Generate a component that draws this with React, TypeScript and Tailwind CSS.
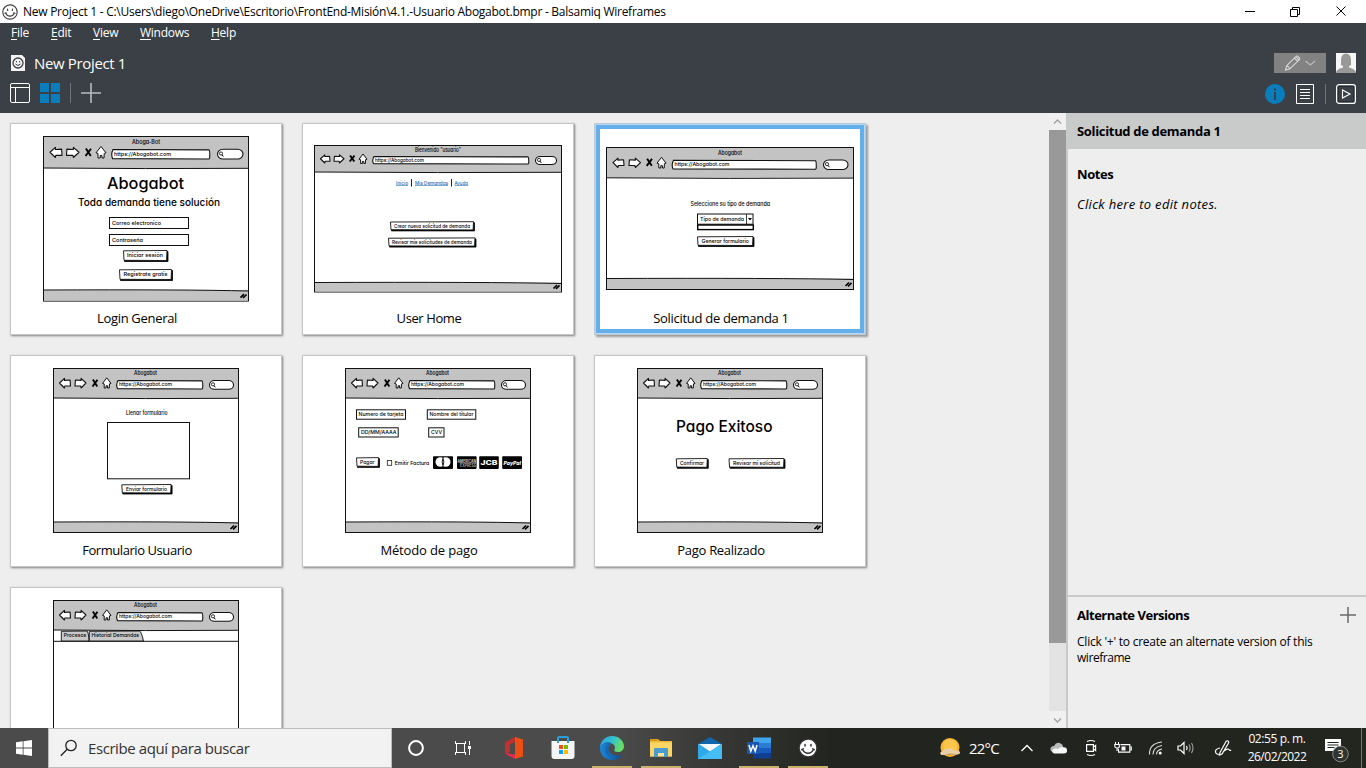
import type { ReactNode } from "react";

const INK = "#111";

type SketchTextProps = {
  x: number;
  y: number;
  w: number;
  size?: number;
  fill?: string;
  weight?: number;
  children: string;
};

function Label({ x, y, w, size = 5.6, fill = "#000", weight = 500, children }: SketchTextProps) {
  return (
    <text
      x={x}
      y={y}
      textLength={w}
      lengthAdjust="spacingAndGlyphs"
      fontSize={size}
      fontWeight={weight}
      fill={fill}
      className="font-['Inter','Open_Sans',sans-serif] [font-feature-settings:'cv11']"
    >
      {children}
    </text>
  );
}

function Button({ x, y, w, h, text, tx, tw }: { x: number; y: number; w: number; h: number; text: string; tx: number; tw: number }) {
  return (
    <g>
      <path d={`M${x + 1} ${y + 1}h${w}v${h}h${-w}z`} fill="#000" stroke="#000" strokeWidth="0.8" />
      <path d={`M${x} ${y + 0.3}L${x + w} ${y}L${x + w - 0.4} ${y + h}L${x + 0.5} ${y + h - 0.2}z`} fill="#fff" stroke={INK} strokeWidth="0.9" />
      <Label x={tx} y={y + h / 2 + 1.9} w={tw} size={5.4}>
        {text}
      </Label>
    </g>
  );
}

function Field({ x, y, w, h, text, tx, tw }: { x: number; y: number; w: number; h: number; text: string; tx: number; tw: number }) {
  return (
    <g>
      <rect x={x} y={y} width={w} height={h} fill="#fff" stroke={INK} strokeWidth="1" />
      <Label x={tx} y={y + h / 2 + 1.9} w={tw} size={5.4}>
        {text}
      </Label>
    </g>
  );
}

type Box = [number, number, number, number];

type FrameProps = {
  x: number;
  y: number;
  r: number;
  b: number;
  head: number;
  foot: number;
  title: string;
  titleX: number;
  titleY: number;
  titleW: number;
  back: Box;
  fwd: Box;
  close: Box;
  home: Box;
  url: Box;
  urlW: number;
  find: Box;
};

function ArrowShape({ box: [x, y, r, b], flip }: { box: Box; flip?: boolean }) {
  const w = r - x;
  const h = b - y;
  const d = `M0 ${h / 2}L${w * 0.45} 0.3V${h * 0.24}L${w - 0.4} ${h * 0.2}L${w} ${h * 0.8}L${w * 0.48} ${h * 0.8}L${w * 0.45} ${h}z`;
  return (
    <path
      d={d}
      transform={flip ? `translate(${r} ${y}) scale(-1 1)` : `translate(${x} ${y})`}
      fill="#fff"
      stroke={INK}
      strokeWidth="1.1"
      strokeLinejoin="round"
    />
  );
}

function Frame(p: FrameProps) {
  const [cx, cy, cr, cb] = p.close;
  const [hx, hy, hr, hb] = p.home;
  const hw = hr - hx;
  const hh = hb - hy;
  const [ux, uy, ur, ub] = p.url;
  const [sx, sy, sr, sb] = p.find;
  return (
    <g>
      <rect x={p.x + 0.5} y={p.y + 0.5} width={p.r - p.x} height={p.b - p.y} fill="#fff" stroke={INK} />
      <path d={`M${p.x + 1} ${p.y + 1}H${p.r}V${p.head}H${p.x + 1}z`} fill="#c3c3c3" />
      <path d={`M${p.x} ${p.head}Q${(p.x + p.r) / 2} ${p.head + 1} ${p.r} ${p.head + 0.3}`} fill="none" stroke={INK} />
      <path d={`M${p.x + 1} ${p.foot}H${p.r}V${p.b}H${p.x + 1}z`} fill="#c3c3c3" />
      <path d={`M${p.x} ${p.foot}Q${p.x + (p.r - p.x) * 0.7} ${p.foot - 0.6} ${p.r} ${p.foot + 1}`} fill="none" stroke={INK} />
      <path d={`M${p.r - 7.5} ${p.b - 3}l3.5 -3.5M${p.r - 5} ${p.b - 2.6}l3.5 -3.5`} stroke="#000" strokeWidth="1.6" />
      <Label x={p.titleX} y={p.titleY} w={p.titleW} size={5.6}>
        {p.title}
      </Label>
      <ArrowShape box={p.back} />
      <ArrowShape box={p.fwd} flip />
      <path d={`M${cx + 0.6} ${cy}L${cr - 0.2} ${cb}M${cr} ${cy + 0.2}L${cx + 0.2} ${cb}`} stroke="#000" strokeWidth="1.9" />
      <path
        d={`M${hx + hw / 2} ${hy}L${hr} ${hy + hh * 0.55}L${hx + hw * 0.82} ${hy + hh * 0.6}L${hx + hw * 0.8} ${hb}H${hx + hw * 0.6}V${hb - hh * 0.22}H${hx + hw * 0.42}V${hb}H${hx + hw * 0.2}V${hy + hh * 0.6}L${hx} ${hy + hh * 0.55}z`}
        fill="#fff"
        stroke={INK}
        strokeWidth="1"
        strokeLinejoin="round"
      />
      <path
        d={`M${ux + 1.5} ${uy}L${ur - 1} ${uy + 0.4}Q${ur} ${uy + 1} ${ur - 0.3} ${ub - 1}L${ur - 1} ${ub}L${ux + 1} ${ub - 0.4}Q${ux - 0.8} ${(uy + ub) / 2} ${ux + 1.5} ${uy}z`}
        fill="#fff"
        stroke={INK}
        strokeWidth="1.1"
      />
      <Label x={ux + 2.5} y={(uy + ub) / 2 + 1.6} w={p.urlW} size={5.4}>
        https://Abogabot.com
      </Label>
      <rect x={sx + 0.5} y={sy + 0.5} width={sr - sx - 1} height={sb - sy - 1} rx={(sb - sy) / 2} ry={(sb - sy) / 2} fill="#fff" stroke={INK} strokeWidth="1.1" />
      <circle cx={sx + 4} cy={(sy + sb) / 2 - 0.6} r="1.6" fill="none" stroke="#000" strokeWidth="0.8" />
      <path d={`M${sx + 5} ${(sy + sb) / 2 + 0.6}l1.3 1.8`} stroke="#000" strokeWidth="1" />
    </g>
  );
}

function SmallFrame({ dx, dy }: { dx: number; dy: number }) {
  const box = (x: number, y: number, r: number, b: number): Box => [x + dx, y + dy, r + dx, b + dy];
  return (
    <Frame
      x={53 + dx}
      y={368 + dy}
      r={238 + dx}
      b={532 + dy}
      head={398 + dy}
      foot={522 + dy}
      title="Abogabot"
      titleX={134 + dx}
      titleY={375.4 + dy}
      titleW={23}
      back={box(59.5, 378, 70.5, 388)}
      fwd={box(75, 378, 86, 388)}
      close={box(92.3, 379.5, 97.5, 386.5)}
      home={box(102.5, 377.8, 111, 388)}
      url={box(116.5, 380.5, 203, 389)}
      urlW={53}
      find={box(209, 380, 234, 389.8)}
    />
  );
}

function LoginSketch() {
  return (
    <>
      <Frame
        x={43} y={136} r={248} b={300.6} head={168} foot={290}
        title="Aboga-Bot" titleX={132} titleY={144} titleW={28}
        back={[50, 147, 62, 157.5]} fwd={[66.5, 147, 79, 157.5]} close={[85.3, 148.5, 91, 156]} home={[96, 146.5, 106, 158]}
        url={[111.5, 149.5, 210, 159]} urlW={57} find={[217, 148.7, 243.5, 159.5]}
      />
      <Label x={107} y={189} w={77} size={16}>Abogabot</Label>
      <Label x={78} y={206.3} w={142} size={10.5}>Toda demanda tiene solución</Label>
      <Field x={109.5} y={217.5} w={79} h={11} text="Correo electronico" tx={112} tw={49} />
      <Field x={109.5} y={234.5} w={79} h={11} text="Contraseña" tx={112} tw={31} />
      <Button x={123.5} y={250.5} w={43.5} h={10} text="Iniciar sesión" tx={127} tw={36} />
      <Button x={119.5} y={269.5} w={52} h={10} text="Registrate gratis" tx={123.5} tw={44} />
    </>
  );
}

function HomeSketch() {
  return (
    <>
      <Frame
        x={314} y={145} r={561} b={291.5} head={172} foot={282.5}
        title={'Bienvenido "usuario"'} titleX={415} titleY={152} titleW={46}
        back={[320.5, 154.5, 330, 163]} fwd={[334, 154.5, 344, 163]} close={[349.5, 155.5, 354.5, 161.5]} home={[359, 154, 367, 163.5]}
        url={[372.5, 156.5, 529, 164]} urlW={49} find={[535, 156, 557, 165]}
      />
      <Label x={396} y={184.6} w={12} size={5} fill="#1f6bb0">Inicio</Label>
      <Label x={415} y={184.6} w={33} size={5} fill="#1f6bb0">Mis Demandas</Label>
      <Label x={454.5} y={184.6} w={13.5} size={5} fill="#1f6bb0">Ayuda</Label>
      <path d="M396 185.5h12M415 185.5h33M454.5 185.5h13.5" stroke="#5b93c4" strokeWidth="0.8" />
      <path d="M411.5 179v7.5M451.5 179v7.5" stroke="#222" />
      <Button x={390.5} y={221.7} w={83} h={8.2} text="Crear nueva solicitud de demanda" tx={394} tw={76} />
      <Button x={388.5} y={237.9} w={86.5} h={8.2} text="Revisar mis solicitudes de demanda" tx={392} tw={80} />
    </>
  );
}

function RequestSketch() {
  return (
    <>
      <Frame
        x={606} y={147} r={853} b={289} head={177.8} foot={278.5}
        title="Abogabot" titleX={718} titleY={154.5} titleW={24}
        back={[613, 157.8, 624, 167.5]} fwd={[629, 157.8, 640.5, 167.5]} close={[646.5, 158.7, 652, 165.8]} home={[657, 157.3, 666, 168]}
        url={[672, 160.3, 816.5, 169.3]} urlW={55} find={[823, 159.5, 848.5, 170]}
      />
      <Label x={690.5} y={206.2} w={79.5} size={5.8}>Seleccione su tipo de demanda</Label>
      <Field x={697.5} y={214} w={55.5} h={10.2} text="Tipo de demanda" tx={700} tw={44} />
      <path d="M746.5 214v10" stroke="#111" strokeWidth="0.8" />
      <path d="M748 218h4l-2 2.4z" />
      <rect x="697.7" y="225" width="55.6" height="4.6" fill="#fff" stroke="#000" strokeWidth="1.4" />
      <Button x={697.5} y={236.5} w={55.5} h={9} text="Generar formulario" tx={701.5} tw={47.5} />
    </>
  );
}

function FormSketch() {
  return (
    <>
      <SmallFrame dx={0} dy={0} />
      <Label x={126} y={415.2} w={41.5}>Llenar formulario</Label>
      <rect x="107.5" y="422.5" width="82" height="56.3" fill="#fff" stroke="#111" />
      <Button x={121.8} y={484.5} w={49.3} h={8.5} text="Enviar formulario" tx={126} tw={41} />
    </>
  );
}

function PaymentSketch() {
  return (
    <>
      <SmallFrame dx={292} dy={0} />
      <Field x={356.5} y={409.8} w={49} h={9.4} text="Numero de tarjeta" tx={358.5} tw={45} />
      <Field x={427.3} y={409.8} w={48.5} h={9.4} text="Nombre del titular" tx={429.5} tw={44} />
      <Field x={358.7} y={427.8} w={39.5} h={9.2} text="DD/MM/AAAA" tx={361} tw={35.5} />
      <Field x={428.7} y={427.8} w={15.3} h={9.2} text="CVV" tx={431} tw={11} />
      <Button x={356.5} y={457.6} w={22} h={8.8} text="Pagar" tx={360} tw={14.5} />
      <rect x="387.3" y="460.5" width="4.4" height="4.8" fill="#fff" stroke="#222" strokeWidth="0.8" />
      <Label x={394.7} y={464.7} w={34.5} size={5.4}>Emitir Factura</Label>
      <rect x="433" y="456.2" width="20" height="12.7" rx="0.8" />
      <circle cx="440.3" cy="462" r="4.8" fill="#fff" />
      <circle cx="445.7" cy="462" r="4.8" fill="#fff" />
      <path d="M443 458.3q-1.8 3.7 0 7.4q1.8 -3.7 0 -7.4z" fill="#fff" stroke="#000" strokeWidth="0.9" />
      <rect x="457" y="456.2" width="19.6" height="12.7" rx="0.8" />
      <Label x={457.6} y={462.7} w={18.4} size={4.4} fill="#c9c9c9" weight={700}>AMERICAN</Label>
      <Label x={460} y={466.6} w={16} size={4.2} fill="#aaa" weight={700}>EXPRESS</Label>
      <rect x="479.2" y="456.2" width="19.6" height="12.7" rx="0.8" />
      <Label x={480.5} y={465} w={17} size={6.8} fill="#fff" weight={800}>JCB</Label>
      <rect x="502.2" y="456.2" width="19.8" height="12.7" rx="0.8" />
      <g transform="translate(503.2 464.5) skewX(-10)">
        <Label x={0} y={0} w={17.5} size={5.6} fill="#fff" weight={800}>PayPal</Label>
      </g>
    </>
  );
}

function PaidSketch() {
  return (
    <>
      <SmallFrame dx={584} dy={0} />
      <Label x={676} y={431.8} w={96.5} size={16}>Pago Exitoso</Label>
      <Button x={676.3} y={458.5} w={31} h={8.8} text="Confirmar" tx={680} tw={24} />
      <Button x={729} y={458.5} w={55} h={8.8} text="Revisar mi solicitud" tx={733} tw={47} />
    </>
  );
}

function TabsSketch() {
  return (
    <>
      <SmallFrame dx={0} dy={232} />
      <path d="M53 641.3H238" stroke="#111" />
      <path d="M61.3 641V631.3L87 631Q88.5 632 89 641z" fill="#c9c9c9" stroke="#111" strokeWidth="0.9" />
      <path d="M89.3 641V631.3L139.5 631Q141.5 632 143.5 641z" fill="#c9c9c9" stroke="#111" strokeWidth="0.9" />
      <Label x={63.7} y={637.4} w={22.5} size={5.4}>Procesos</Label>
      <Label x={91.5} y={637.4} w={47.5} size={5.4}>Historial Demandas</Label>
    </>
  );
}

type CardProps = { x: number; y: number; name?: string; tracking?: string; selected?: boolean; children: ReactNode };

function Card({ x, y, name, tracking, selected, children }: CardProps) {
  return (
    <article
      className={
        selected
          ? "flex h-[212px] w-[272px] flex-col border-2 border-[#b5d8f3] bg-white shadow-[2px_2px_2px_#9a9a9a] outline-1 -outline-offset-1 outline-[#bcc9d3]"
          : "flex h-[212px] w-[272px] flex-col border border-[#c6c6c6] bg-white shadow-[1px_1px_2px_#7f7f7f]"
      }
    >
      <div className={selected ? "flex min-h-0 flex-1 flex-col border-4 border-[#64aeeb]" : "flex min-h-0 flex-1 flex-col p-[5px]"}>
        <svg viewBox={`${x + 6} ${y + 6} 260 176`} className="h-[176px] w-[260px] shrink-0">
          {children}
        </svg>
        {name && (
          <h2 className="w-[242px] text-center text-[13px] leading-[26px]">
            <span className={tracking}>{name}</span>
          </h2>
        )}
      </div>
    </article>
  );
}

function Smiley({ className, fill, line }: { className: string; fill: string; line: string }) {
  return (
    <svg viewBox="0 0 16 16" className={className} fill="none" stroke={line} strokeWidth="1.2" strokeLinecap="round">
      <path d="M8 .8C12 .6 15.2 4 15.2 8S12 15.3 8 15.2S.8 12 .8 8S4 1 8 .8z" fill={fill} />
      <path d="M5.6 5.2v1.2M10.4 5.2v1.2M3.6 9Q5 12.2 8 12.2T12.4 9M3 9.3l1.2-.6M13 9.3l-1.2-.6" />
    </svg>
  );
}

function TitleBar() {
  return (
    <header className="flex h-[23px] items-center bg-white pl-[2px] text-[12px] text-black">
      <Smiley className="h-[16px] w-[16px]" fill="#fff" line="#444" />
      <span className="ml-[5px] leading-4 tracking-[-0.265px]">New Project 1 - C:\Users\diego\OneDrive\Escritorio\FrontEnd-Misión\4.1.-Usuario Abogabot.bmpr - Balsamiq Wireframes</span>
      <svg viewBox="0 0 110 14" className="mr-[17px] ml-auto h-[14px] w-[110px]" fill="none" stroke="#000">
        <path d="M6 6.500h10M51.500 4.500h7v7h-7zM53.500 4.500v-2h7v7h-2" />
        <path d="M97.500 1.500l9 9M106.500 1.500l-9 9" />
      </svg>
    </header>
  );
}

const menus = [
  ["F", "ile", "w-[40px]"],
  ["E", "dit", "w-[42px]"],
  ["V", "iew", "w-[47px]"],
  ["W", "indows", "w-[71px]"],
  ["H", "elp", "w-[40px]"],
];

function AppHeader() {
  return (
    <div className="h-[90px] bg-[#3a4046] text-white">
      <nav className="flex h-[20px] items-center pl-[11px] text-[12px] leading-5 tracking-[-0.25px]">
        {menus.map(([k, rest, w]) => (
          <span key={k} className={w}>
            <span className="underline underline-offset-2">{k}</span>{rest}
          </span>
        ))}
      </nav>
      <div className="flex h-[40px] items-center pr-[10px] pl-[11px]">
        <svg viewBox="0 0 14 16" className="h-[16px] w-[14px]">
          <path d="M0 0h11l3 3v13H0z" fill="#f4f4f4" />
          <circle cx="7" cy="8" r="5" fill="none" stroke="#3a4046" strokeWidth="1.3" />
          <path d="M5.4 6v1.4M8.6 6v1.4M4.4 9q2.6 3 5.2 0" fill="none" stroke="#3a4046" />
        </svg>
        <span className="ml-[9px] text-[15px] leading-5 tracking-[-0.35px]">New Project 1</span>
        <div className="ml-auto flex h-[20px] w-[52px] items-center bg-[#828282]">
          <svg viewBox="0 0 52 20" className="h-5 w-[52px]" fill="none" stroke="#d6d6d6" strokeWidth="1.1">
            <path d="M11.500 17l1.200-4.200L22 3.300q1-.8 2.200.3l1.200 1.300q.8 1-.2 2L15.600 16l-4.100 1zM20.300 5l3.400 3.400M21.800 3.600l3.300 3.400M12.700 12.800q2.300.5 2.900 3.200" />
            <path d="M31.500 8l4.800 4 4.800-4" stroke="#bdbdbd" />
          </svg>
        </div>
        <svg viewBox="0 0 20 20" className="ml-[10px] h-5 w-5">
          <path d="M0 0h20v20H0z" fill="#f6f6f6" />
          <path d="M5 11Q4 .5 10 .5T15 11q1 1-2 2v1.500q7 1.500 7 5.500H0q0-4 7-5.500V13q-3-1-2-2z" fill="#999" />
        </svg>
      </div>
      <div className="flex h-[30px] items-start pr-[10px] pl-[10px]">
        <svg viewBox="0 0 20 20" className="h-5 w-5" fill="none" stroke="#fff">
          <rect x=".5" y=".5" width="19" height="19" rx="1.500" />
          <path d="M1 4.500h18M5.500 4.500v15" />
        </svg>
        <svg viewBox="0 0 20 20" className="ml-[10px] h-5 w-5" fill="#0a7dbd">
          <path d="M0 0h9v9H0zM11 0h9v9h-9zM0 11h9v9H0zM11 11h9v9h-9z" />
        </svg>
        <span className="ml-[10px] h-5 w-px bg-[#6f7478]" />
        <svg viewBox="0 0 20 20" className="ml-[10px] h-5 w-5" stroke="#b9bcbe" strokeWidth="1.600">
          <path d="M10 0v20M0 10h20" />
        </svg>
        <svg viewBox="0 0 20 20" className="mt-px ml-auto h-5 w-5">
          <circle cx="10" cy="10" r="10" fill="#0a7dbd" />
          <path d="M9 8h2v8H9zM9 4.500h2v2H9z" fill="#3a4046" />
        </svg>
        <svg viewBox="0 0 18 20" className="mt-px ml-[11px] h-5 w-[18px]" fill="none" stroke="#fff">
          <path d="M.5.500h17v19H.5zM4 5.500h10M4 8.500h10M4 11.500h10M4 14.500h10" />
        </svg>
        <span className="mt-px ml-[11px] h-5 w-px bg-[#6f7478]" />
        <svg viewBox="0 0 20 20" className="mt-px ml-[10px] h-5 w-5" fill="none" stroke="#fff">
          <rect x=".6" y=".6" width="18.800" height="18.800" rx="2.500" strokeWidth="1.200" />
          <rect x="2.500" y="2.500" width="15" height="15" stroke="#20252a" strokeDasharray="2 1" />
          <path d="M6.500 6l7.500 4-7.500 4z" strokeWidth="1.100" />
        </svg>
      </div>
    </div>
  );
}

function Gallery() {
  return (
    <main className="min-w-0 flex-1 overflow-hidden pt-[10px] pl-[10px]">
      <div className="grid grid-cols-[272px_272px_272px] gap-5">
        <Card x={10} y={123} name="Login General" tracking="tracking-[-0.31px]"><LoginSketch /></Card>
        <Card x={302} y={123} name="User Home" tracking="tracking-[-0.4px]"><HomeSketch /></Card>
        <Card x={594} y={123} name="Solicitud de demanda 1" tracking="tracking-[-0.3px]" selected><RequestSketch /></Card>
        <Card x={10} y={355} name="Formulario Usuario" tracking="tracking-[-0.43px]"><FormSketch /></Card>
        <Card x={302} y={355} name="Método de pago" tracking="tracking-[-0.15px]"><PaymentSketch /></Card>
        <Card x={594} y={355} name="Pago Realizado" tracking="tracking-[-0.3px]"><PaidSketch /></Card>
        <Card x={10} y={587}><TabsSketch /></Card>
      </div>
    </main>
  );
}

function ScrollBar() {
  return (
    <div className="flex w-[17px] flex-col bg-[#e3e3e3]">
      <svg viewBox="0 0 17 17" className="h-[17px] bg-[#f0f0f0]" fill="none" stroke="#a0a0a0" strokeWidth="1.300"><path d="M5 10.500L8.500 7l3.500 3.500" /></svg>
      <div className="h-[513px] bg-[#999]" />
      <svg viewBox="0 0 17 17" className="mt-auto h-[17px] bg-[#f0f0f0]" fill="none" stroke="#a0a0a0" strokeWidth="1.300"><path d="M5 7.500L8.500 11l3.500-3.500" /></svg>
    </div>
  );
}

function SidePanel() {
  return (
    <aside className="flex w-[300px] flex-col border-l-2 border-[#c9c9c9] text-[13px] text-black">
      <h3 className="h-[36px] bg-[#c9caca] pl-[9px] leading-[36px] font-bold tracking-[-0.33px]">Solicitud de demanda 1</h3>
      <section className="flex h-[446px] flex-col pl-[9px]">
        <h4 className="mt-[15px] leading-5 font-bold tracking-[-0.4px]">Notes</h4>
        <p className="mt-[10px] leading-5 tracking-[0.31px] italic">Click here to edit notes.</p>
      </section>
      <section className="flex-1 border-t-2 border-[#c9c9c9] pl-[9px]">
        <div className="flex items-center pt-[8px] pr-[10px]">
          <h4 className="leading-5 font-bold tracking-[-0.48px]">Alternate Versions</h4>
          <svg viewBox="0 0 16 16" className="ml-auto h-4 w-4" stroke="#6a6a6a" strokeWidth="1.500"><path d="M8 0v16M0 8h16" /></svg>
        </div>
        <p className="mt-[9px] text-[12px] leading-4 tracking-[-0.23px]">
          Click '+' to create an alternate version of this
          <br />
          <span className="tracking-[-0.45px]">wireframe</span>
        </p>
      </section>
    </aside>
  );
}

function TaskSlot({ open, children }: { open?: boolean; children: ReactNode }) {
  return (
    <div className="flex h-10 w-[49px] flex-col items-center">
      <div className="flex h-[38px] items-center pt-[2px]">{children}</div>
      <div className={open ? "h-[2px] w-[40px] bg-[#c9b06b]" : "h-[2px]"} />
    </div>
  );
}

function TaskBar() {
  return (
    <footer className="flex h-10 items-center bg-linear-to-r from-[#4b4b4b] from-45% via-[#22241f] via-61% to-[#22261f] text-white">
      <div className="flex w-[48px] justify-center">
        <svg viewBox="0 0 16 16" className="h-4 w-4" fill="#fff"><path d="M0 2.200L6.700 1.300V7.600H0zM7.500 1.200L16 0v7.600H7.500zM0 8.400h6.700v6.300L0 13.800zM7.500 8.400H16V16l-8.500-1.200z" /></svg>
      </div>
      <div className="flex h-10 w-[344px] items-center border border-[#bdbdbd] bg-[#f2f2f2] pl-[11px] text-[#333]">
        <svg viewBox="0 0 18 18" className="h-[18px] w-[18px]" fill="none" stroke="#222" strokeWidth="1.300"><circle cx="11" cy="6.500" r="5.200" /><path d="M7.200 10.300L.8 16.800" /></svg>
        <span className="ml-[10px] text-[15px] tracking-[-0.42px]">Escribe aquí para buscar</span>
      </div>
      <div className="-ml-px flex">
        <TaskSlot><svg viewBox="0 0 18 18" className="h-[18px] w-[18px]" fill="none"><circle cx="9" cy="9" r="6.900" stroke="#fff" strokeWidth="2" /></svg></TaskSlot>
        <TaskSlot>
          <svg viewBox="0 0 18 18" className="-ml-1 h-[18px] w-[18px]" fill="none" stroke="#fff" shapeRendering="crispEdges"><path d="M1.500 2v2.500h10V2M1.500 16v-2.500h10V16M2.500 4.500v9M10.500 4.500v9M15.500 2v4M15.500 10v6" /><path d="M14 6.500h3v3h-3z" fill="#fff" stroke="none" /></svg>
        </TaskSlot>
        <TaskSlot>
          <svg viewBox="0 0 20 22" className="h-[22px] w-5">
            <path d="M1 5.500L11 0v5L6 7.500V15l-4 2L1 16z" fill="#c0302c" />
            <path d="M11 0l8 2.500v17L11 22z" fill="#ec4f14" />
            <path d="M1 16l10 1.500V22L3 18z" fill="#e02b4c" />
          </svg>
        </TaskSlot>
        <TaskSlot>
          <svg viewBox="0 0 24 24" className="h-6 w-6">
            <path d="M7 6V2q0-1 1-1h8q1 0 1 1v4" fill="none" stroke="#2a9fd8" strokeWidth="2" />
            <path d="M.5 5h23v15q0 3-3 3h-17q-3 0-3-3z" fill="#f5f5f5" />
            <path d="M6 5h2v2H6zM16 5h2v2h-2z" fill="#2a9fd8" />
            <path d="M8 9h4v4H8z" fill="#f25022" /><path d="M13 9h4v4h-4z" fill="#7fba00" /><path d="M8 14h4v4H8z" fill="#00a4ef" /><path d="M13 14h4v4h-4z" fill="#ffb900" />
          </svg>
        </TaskSlot>
        <TaskSlot open>
          <svg viewBox="0 0 24 24" className="h-6 w-6">
            <defs>
              <linearGradient id="edgeTop" x1="0" x2="1" y1="0" y2=".3"><stop offset="0" stopColor="#2a9be0" /><stop offset=".55" stopColor="#35c1d0" /><stop offset="1" stopColor="#66dd62" /></linearGradient>
              <linearGradient id="edgeLow" x1="0" x2="1"><stop offset="0" stopColor="#1b86d8" /><stop offset="1" stopColor="#0f4d94" /></linearGradient>
            </defs>
            <path d="M0 12C0 5 5 0 12 0s12 5 12 10.500c0 3.500-3 5.500-6 5.500s-4-1-3.700-2C15 13 15.500 11 14 9 11 5.500 3 5 0 12z" fill="url(#edgeTop)" />
            <path d="M0 12C1.500 6.500 8 5.500 11.500 7 8 8 7 12 9.500 16c3 4 8 4.500 13 2.500C20 22.500 16 24 12 24 5 24 0 19 0 12z" fill="url(#edgeLow)" />
            <path d="M9.500 10C7 12.500 8 20 15 22c-7 1-12-6-9-11 1-1.500 3.500-3 5.500-4Q10 8 9.500 10z" fill="#1468b3" />
          </svg>
        </TaskSlot>
        <TaskSlot open>
          <svg viewBox="0 0 22 20" className="h-5 w-[22px]">
            <path d="M0 1h8l2 2h12v15.500H0z" fill="#f0b93a" /><path d="M0 4.500h22v14H0z" fill="#fbd667" /><path d="M0 1h8v2H0z" fill="#d99a1c" />
            <path d="M4 19v-8q0-1 1-1h12q1 0 1 1v8h-4v-4H8v4z" fill="#4a9bd0" /><path d="M8 15h6v3H8z" fill="#f6e5a0" />
          </svg>
        </TaskSlot>
        <TaskSlot>
          <svg viewBox="0 0 24 22" className="h-[22px] w-6">
            <path d="M0 7L12 0l12 7v3H0z" fill="#1264ab" /><path d="M0 7h24v15H0z" fill="#2fa8ea" /><path d="M1 7h22L12 14.500z" fill="#f3f7fb" /><path d="M24 7v15H0l12-7.500z" fill="#45bdf2" />
          </svg>
        </TaskSlot>
        <TaskSlot open>
          <svg viewBox="0 0 24 22" className="h-[22px] w-6">
            <path d="M6 .5h18v5.500H6z" fill="#41a5ee" /><path d="M6 6h18v5H6z" fill="#2b7cd3" /><path d="M6 11h18v5H6z" fill="#185abd" /><path d="M6 16h18v5.500H6z" fill="#103f91" />
            <path d="M0 5h12v12H0z" fill="#1a55b4" />
            <path d="M2 8l1.800 6.200L6 8.800l2.200 5.400L10 8" fill="none" stroke="#fff" strokeWidth="1.500" />
          </svg>
        </TaskSlot>
        <TaskSlot open><Smiley className="h-5 w-5" fill="#fff" line="#333" /></TaskSlot>
      </div>
      <div className="ml-auto flex h-10 items-center">
        <svg viewBox="0 0 22 20" className="h-5 w-[22px]"><circle cx="11" cy="9.500" r="9.500" fill="#f7b32d" /><circle cx="11" cy="8" r="7" fill="#fcc64b" /><path d="M2 17q-2-3 1.500-3.700Q5 10 8.500 11q4-2.500 6 1.500Q20 11.500 21 14q.3 2.500-3 2.500z" fill="#e8cfaa" /><path d="M6 17q2-2 6-1.500t8 1z" fill="#c99a5a" /></svg>
        <span className="ml-[8px] w-[51px] text-[15px] tracking-[-0.8px]">22°C</span>
        <svg viewBox="0 0 14 8" className="h-2 w-[14px]" fill="none" stroke="#fff" strokeWidth="1.300"><path d="M1.500 7L7 1.500 12.500 7" /></svg>
        <svg viewBox="0 0 17 12" className="ml-[16px] h-3 w-[17px]"><path d="M3 10Q0 9 .5 6.500T4 4Q6 0 9.500 1t3.500 4q4 0 4 3t-3 3H4z" fill="#b9bbbb" /><path d="M4 11.500Q1 10 3 7.500 5 6 8 7q3-3 5-1.500 4 0 4 3t-3 3z" fill="#f7f7f7" /></svg>
        <svg viewBox="0 0 14 18" className="ml-[17px] h-[18px] w-[14px]" fill="none" stroke="#fff" strokeWidth="1.200"><path d="M2.600 5.600h6.800v6.800H2.600zM9.400 8l2.200-1.500v5L9.400 10M3 2.500q4-2 8 0M3 15.500q4 2 8 0" /></svg>
        <svg viewBox="0 0 18 14" className="ml-[16px] h-[14px] w-[18px]" fill="none" stroke="#fff" strokeWidth="1.100"><path d="M6.500 3.600h9.300v7.500H4.500V8M15.800 6h1.500v3h-1.500M1.500 1v2M4.500 1v2M.8 3.500h4.500v2q0 1.500-2.200 1.500T.8 5.500zM3 7v3" /><path d="M7.500 5.500h4v4h-4z" fill="#fff" stroke="none" /></svg>
        <svg viewBox="0 0 16 16" className="ml-[16px] h-4 w-4" fill="none" stroke="#ddd" strokeWidth="1.100"><path d="M1.500 14.500Q1 3.500 14 2M5 14.500Q5 7 14 5.500M8.500 14.500Q8.500 10 14 9" /><circle cx="12.200" cy="13" r="1.500" fill="#fff" stroke="none" /></svg>
        <svg viewBox="0 0 18 14" className="ml-[13px] h-[14px] w-[18px]" fill="none" stroke="#fff" strokeWidth="1.200"><path d="M1 5h2.500L7 1.500v11L3.500 9H1zM9.500 5q1.200 2 0 4" /><path d="M12 3.500q2.200 3.500 0 7M14.500 2q3 5 0 10" stroke="#999" /></svg>
        <svg viewBox="0 0 18 18" className="ml-[19px] h-[18px] w-[18px]" fill="none" stroke="#fff" strokeWidth="1.200"><path d="M6 13.500L12 2.500q1.500-1.500 2.500 0 .5 1-.2 2L8 15l-2.500 1zM6 9q-5 1-4.500 4t5 2M10 12q4-3 5-1.500t2 .5" /></svg>
        <div className="ml-[11px] flex w-[68px] flex-col items-center text-[12px] leading-[18px]">
          <span className="tracking-[-0.4px]">02:55 p. m.</span>
          <span className="tracking-[-0.5px]">26/02/2022</span>
        </div>
        <svg viewBox="0 0 26 26" className="mt-[3px] ml-[14px] h-[26px] w-[26px]">
          <path d="M0 2h16v12h-3l-3 3v-3H0z" fill="#fff" /><path d="M2.500 5.500h11M2.500 8h11M2.500 10.500h7" stroke="#22261f" />
          <circle cx="15.500" cy="17" r="7.800" fill="#30332f" stroke="#888" /><text x="15.500" y="21" textAnchor="middle" fontSize="11" fill="#fff">3</text>
        </svg>
        <span className="ml-[10px] h-10 w-px bg-[#777]" />
        <span className="w-[4px]" />
      </div>
    </footer>
  );
}

export default function App() {
  return (
    <div className="flex h-[768px] w-[1366px] flex-col overflow-hidden bg-[#eee] font-['Open_Sans','Noto_Sans',sans-serif] text-black">
      <TitleBar />
      <AppHeader />
      <div className="flex min-h-0 flex-1">
        <Gallery />
        <ScrollBar />
        <SidePanel />
      </div>
      <TaskBar />
    </div>
  );
}
